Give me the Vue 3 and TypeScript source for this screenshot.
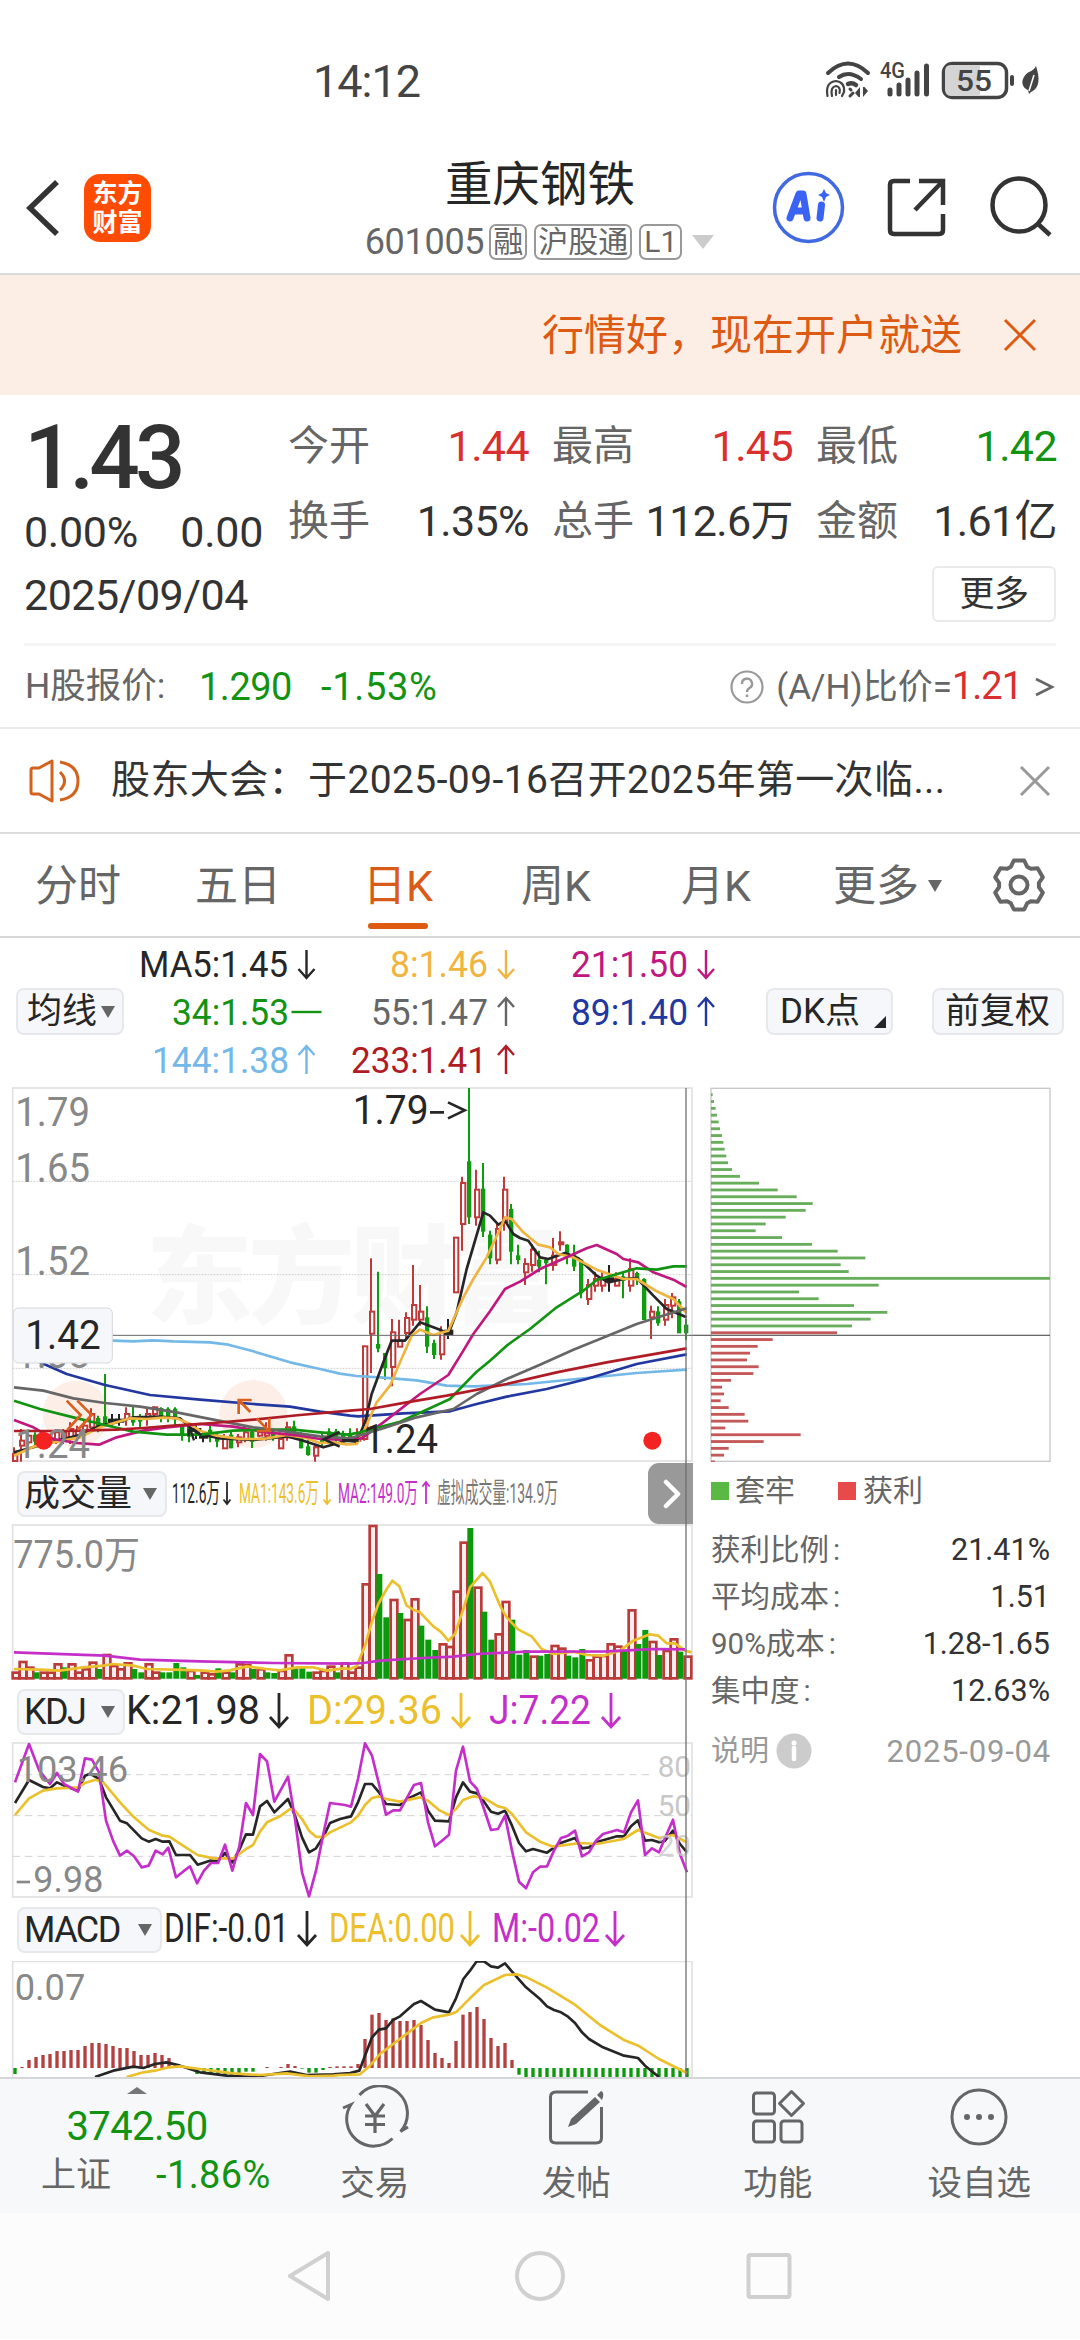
<script setup lang="ts">
type Kind = 'r' | 'g' | 'k'
type Candle = [Kind, number, number, number, number]

// Chart drawings use three units per pixel; bars are 21 units apart.
const xAt = (i: number) => 45 + 21 * i
const shift = (s: string) =>
  s.trim().split(/\s+/).map(p => { const [x, y] = p.split(',').map(Number); return `${x + 1020},${y}` }).join(' ')

const candleSrc = `r 1105 1125 1146 1146|r 1050 1085 1100 1148|r 1065 1070 1090 1100|g 1060 1070 1085 1100|r 1065 1070 1090 1100|g 1065 1070 1090 1105|r 1050 1060 1085 1095|r 1050 1060 1080 1095|r 1030 1050 1080 1095|r 1040 1055 1070 1080|r 1020 1040 1060 1080|r 988 1005 1045 1060|g 1010 1020 1040 1060|g 885 1015 1035 1040|k 1005 1022 1028 1040|k 1005 1022 1028 1040|r 985 1005 1020 1040|g 978 1020 1028 1040|g 1005 1015 1025 1045|r 988 1005 1020 1040|r 982 985 1005 1020|g 985 990 1010 1030|g 985 992 1010 1030|g 985 992 1015 1040|g 1040 1045 1065 1085|g 1030 1045 1070 1090|k 1035 1050 1055 1080|k 1060 1070 1076 1090|g 1040 1055 1070 1090|g 1060 1070 1085 1105|r 1065 1080 1108 1110|g 1055 1070 1105 1108|r 1065 1075 1090 1105|r 1040 1060 1080 1090|g 1050 1060 1085 1107|r 1045 1060 1070 1075|r 1030 1060 1070 1085|g 1050 1060 1075 1085|r 1060 1080 1108 1110|r 1028 1045 1075 1085|g 1025 1045 1065 1075|g 1060 1075 1105 1108|g 1080 1105 1125 1130|r 1095 1105 1130 1148|g 1060 1075 1090 1105|g 1048 1060 1080 1090|g 1050 1060 1080 1090|g 1055 1065 1080 1090|g 1048 1065 1080 1085|r 1048 1075 1085 1085|r 800 802 1080 1085|r 538 698 764 882|g 578 798 806 820|g 822 825 865 902|r 720 760 864 922|r 722 785 803 803|r 700 717 762 780|r 558 678 722 740|r 618 698 722 740|g 682 718 800 822|g 782 795 825 840|r 742 760 826 842|k 720 755 765 780|r 474 476 640 640|r 293 312 435 515|g 27 250 412 435|r 272 332 415 440|g 252 332 455 474|g 455 470 535 556|r 435 450 542 556|r 293 332 430 455|g 375 393 515 556|g 497 532 540 556|r 538 555 580 618|r 495 512 558 578|g 515 545 560 580|g 540 545 550 616|r 477 530 558 575|r 457 490 496 515|g 496 500 530 556|g 497 530 560 576|g 540 545 640 658|r 600 618 660 678|r 578 600 620 638|r 578 600 620 638|k 558 598 605 638|r 580 600 620 620|g 580 595 603 658|r 538 570 620 638|g 578 585 600 618|g 598 603 720 720|r 680 698 715 780|g 682 700 730 740|r 660 678 722 740|r 642 655 680 718|g 660 670 760 762|g 720 740 760 782`
const candles: Candle[] = candleSrc.split('|').map(s => {
  const [k, ...n] = s.split(' ')
  return [k as Kind, ...n.map(Number)] as Candle
})
const tone: Record<Kind, string> = { r: '#bf3b3b', g: '#109c10', k: '#222' }

const priceLines: { c: string; p: string }[] = [
  { c: '#74b8e8', p: '45,772 200,780 340,785 400,787 460,784 520,787 630,790 685,797 760,817 870,850 960,870 ' + shift('0,884 50,891 130,896 230,904 320,920 400,922 560,915 740,897 890,882 1040,872') },
  { c: '#2237a0', p: '45,800 120,850 200,885 315,918 450,948 600,962 760,975 870,983 960,998 ' + shift('30,1010 55,1012 190,1003 330,997 410,975 500,953 620,930 740,900 890,855 1040,826') },
  { c: '#262626', p: '42,1120 100,1105 170,1085 240,1068 300,1040 350,1030 400,1015 480,1013 540,1018 570,1045 600,1065 660,1078 760,1083 860,1072 910,1085 970,1105 1005,1095 1040,1085 ' + shift('50,1088 75,1030 95,945 130,850 155,785 195,785 240,730 300,752 325,765 350,700 380,570 430,400 450,410 475,437 495,425 520,465 540,477 565,485 600,535 625,540 675,522 715,538 770,590 805,610 850,600 890,597 940,650 980,690 1040,715') },
  { c: '#f0b440', p: '42,1130 100,1103 160,1090 240,1075 300,1045 350,1030 390,1018 440,1020 490,1016 530,1018 570,1035 600,1055 650,1070 720,1080 790,1080 860,1068 910,1075 960,1092 1000,1090 1040,1096 ' + shift('50,1095 75,1050 110,970 150,920 180,850 215,770 240,752 280,768 325,755 370,655 400,600 440,535 480,450 495,415 515,420 550,460 595,497 630,505 655,525 700,535 770,572 850,600 890,600 950,637 1000,660 1040,702') },
  { c: '#c0187f', p: '42,1023 100,1045 160,1080 230,1092 297,1097 350,1075 430,1055 500,1045 600,1035 700,1043 800,1060 900,1070 960,1080 1045,1083 ' + shift('65,1078 130,1030 240,945 325,888 370,815 400,765 450,697 495,630 540,608 600,570 680,535 740,508 770,498 830,525 850,540 895,550 940,580 1000,602 1040,624') },
  { c: '#129312', p: '42,965 120,990 220,1015 315,1038 400,1058 500,1067 600,1067 700,1055 800,1052 880,1052 960,1060 1045,1067 ' + shift('60,1060 180,1028 260,992 330,960 410,878 450,845 500,800 570,750 650,685 730,635 770,603 890,568 950,572 1000,562 1040,562') },
  { c: '#666', p: '42,925 130,935 220,958 315,972 420,983 530,1000 640,1022 760,1045 860,1058 960,1072 1050,1078 ' + shift('50,1072 130,1048 230,1015 340,990 410,945 500,900 600,857 700,812 800,772 890,735 1040,688') },
  { c: '#b01c26', p: '42,1056 200,1056 350,1052 430,1047 520,1040 640,1032 760,1022 900,1008 1050,995 ' + shift('90,990 200,970 320,950 500,915 650,880 800,850 1040,808') },
]

const volumes = `r640 r608 r625 g640 r640 r640 r615 g625 r615 r640 r630 r610 g630 r587 r620 r630 r612 g630 g640 r615 r640 g640 g640 g612 g625 r635 g648 r640 r645 g628 r640 g640 r615 r618 g630 r630 g640 g642 r635 r588 g628 g627 g638 r640 r635 r622 g640 r612 r640 r625 r375 r200 g345 g475 r422 g462 r482 r420 g500 g542 g573 r555 r563 r397 r250 g207 r385 g458 g542 r525 r428 g482 g587 g573 r592 g590 g585 r560 r568 g590 g595 g570 r603 r592 r590 r555 r562 g575 r453 g555 g513 r548 g588 r575 r540 g578 r592`
  .split(' ').map(s => ({ k: s[0] as Kind, y: Number(s.slice(1)) }))
const volMa1 = '42,630 120,632 180,635 250,625 310,620 340,615 400,620 440,630 520,632 600,634 650,638 690,634 740,622 800,630 840,634 890,625 940,625 980,635 1030,628 ' + shift('30,630 50,622 75,560 95,490 115,435 140,390 157,365 178,382 200,440 220,452 240,460 280,502 302,518 325,545 345,525 370,450 390,385 428,342 450,368 480,440 500,475 535,512 575,532 605,570 640,585 700,578 740,588 790,590 840,575 880,545 930,526 955,530 980,553 1005,553 1035,575 1055,580')
const volMa2 = '42,580 315,590 420,602 600,607 820,612 1050,614 ' + shift('70,612 120,605 250,597 340,593 410,585 560,578 800,577 850,575 940,570 1035,571')

const lineK = '45,222 87,153 129,174 150,178 171,160 192,170 234,185 255,140 270,134 297,150 318,205 360,275 381,283 425,328 446,338 467,330 488,338 508,337 528,378 570,378 593,407 630,395 654,396 675,372 697,400 720,358 738,316 759,317 780,232 801,216 823,250 864,210 885,260 906,325 927,370 948,358 969,325 990,282 1020,270 ' + shift('33,262 54,220 75,165 96,165 117,190 138,225 180,228 205,208 243,190 264,245 285,275 327,277 348,205 369,160 390,188 411,193 432,218 453,248 474,254 495,245 516,290 537,342 558,367 579,360 621,371 660,343 705,327 726,358 747,355 768,340 831,322 852,322 873,292 894,274 915,335 936,333 957,340 975,335 999,305 1020,345 1041,370')
const lineD = '45,258 87,208 129,185 171,178 234,175 255,162 286,152 310,160 360,220 402,265 446,302 488,320 508,323 549,350 593,378 640,388 700,388 738,360 759,348 780,308 801,280 840,262 870,240 885,245 906,270 927,305 948,323 970,325 990,310 ' + shift('33,280 54,260 75,228 96,207 117,202 138,210 180,218 240,205 264,215 300,245 327,258 348,240 369,213 400,202 432,207 474,232 495,237 516,255 558,310 600,338 640,353 720,342 770,345 850,330 894,303 957,327 999,318 1041,340')
const lineJ = '45,160 87,45 118,125 150,165 171,132 192,165 234,188 255,88 276,92 297,130 318,275 339,335 360,380 381,365 402,382 425,415 446,410 467,365 488,376 505,356 528,445 549,428 570,412 591,463 612,425 633,402 654,402 675,347 697,425 718,352 738,222 759,258 780,75 801,97 823,218 864,143 885,270 906,430 927,502 948,425 969,320 990,222 1035,228 ' + shift('33,233 54,150 75,43 96,80 117,165 138,257 160,244 180,244 200,208 222,168 243,162 264,280 285,352 306,335 327,317 348,125 369,53 390,157 411,180 432,240 453,303 474,300 495,260 516,365 537,458 558,478 579,430 600,413 621,412 642,365 663,327 684,320 705,305 726,382 747,370 768,335 789,315 831,303 852,310 873,250 894,214 915,378 936,358 957,370 978,320 999,272 1020,375 1041,430')

const macd: number[] = [1035, 1014, 993, 984, 978, 975, 966, 966, 963, 963, 951, 942, 942, 945, 951, 957, 957, 966, 978, 978, 972, 978, 987, 1005, 1014, 1020, 1035, 1035, 1038, 1038, 1038, 1038, 1036, 1028, 1028, 1017, 1014, 1017, 1014, 1005, 1011, 1019, 1031, 1031, 1023, 1014, 1012, 1012, 1012, 1005, 930, 857, 852, 873, 868, 876, 876, 873, 888, 933, 972, 987, 1002, 936, 857, 849, 834, 870, 927, 951, 942, 993, 1037, ...Array(24).fill(1046)]
const lineDif = '285,1044 340,1025 400,1013 430,1017 465,1005 500,1000 540,1010 600,1030 680,1040 760,1044 820,1035 870,1028 920,1038 1000,1036 ' + shift('30,1032 58,1025 75,980 96,925 117,902 138,898 159,873 180,862 222,825 243,816 285,842 327,850 348,808 370,750 390,725 410,697 432,697 453,712 474,716 495,703 516,728 558,775 600,810 621,832 642,843 663,850 684,863 705,882 726,910 747,930 789,955 852,980 894,987 915,1010 957,1044')
const lineDea = '380,1044 430,1030 465,1025 500,1016 540,1012 600,1020 700,1033 780,1038 860,1033 930,1042 1000,1040 ' + shift('0,1038 60,1036 90,1010 120,975 243,882 280,865 327,857 350,848 390,808 432,768 495,738 530,736 560,745 620,775 705,827 780,888 850,932 895,950 957,990 1041,1032')

const chips: number[] = [68, 72, 77, 81, 86, 90, 96, 100, 104, 109, 114, 126, 150, 207, 263, 320, 368, 347, 287, 227, 197, 276, 366, 443, 526, 452, 476, 1080, 566, 327, 386, 492, 592, 542, 486, 441, 248, 203, 180, 171, 206, 190, 123, 96, 102, 92, 116, 164, 175, 106, 332, 221, 116, 102, 75]

interface Tag { t: string; x: number; w: number; y: number; c: string; dir: number; ax: number }
const maTags: Tag[] = [
  { t: 'MA5:1.45', x: 139, w: 149, y: 39, c: '#262626', dir: 1, ax: 306.5 },
  { t: '8:1.46', x: 390, w: 98, y: 39, c: '#f0b440', dir: 1, ax: 506 },
  { t: '21:1.50', x: 571, w: 117, y: 39, c: '#c0187f', dir: 1, ax: 706 },
  { t: '34:1.53', x: 172, w: 117, y: 87, c: '#129312', dir: 0, ax: 306.5 },
  { t: '55:1.47', x: 371, w: 117, y: 87, c: '#666', dir: -1, ax: 506 },
  { t: '89:1.40', x: 571, w: 117, y: 87, c: '#2237a0', dir: -1, ax: 706 },
  { t: '144:1.38', x: 152, w: 137, y: 135, c: '#74b8e8', dir: -1, ax: 306.5 },
  { t: '233:1.41', x: 351, w: 136, y: 135, c: '#b01c26', dir: -1, ax: 506 },
]
const arrow = (x: number, cy: number, dir: number, h = 14, w = 8) =>
  dir === 0 ? `M${x - 15} ${cy}h30`
    : `M${x} ${cy - h * dir}V${cy + h * dir}M${x - w} ${cy + (h - w - 1) * dir}L${x} ${cy + h * dir}L${x + w} ${cy + (h - w - 1) * dir}`

interface Head { name: string; w: number; fs: number; by: number; tags: { t: string; x: number; w: number; c: string; dir: number; ax: number }[] }
const Y = '#ebc02c', M = '#c42fc9'
const heads: Record<'vol' | 'kdj' | 'macd', Head> = {
  vol: { name: '成交量', w: 150, fs: 28, by: 42, tags: [
    { t: '112.6万', x: 172, w: 48, c: '#262626', dir: 1, ax: 227 },
    { t: 'MA1:143.6万', x: 239, w: 80, c: Y, dir: 1, ax: 327 },
    { t: 'MA2:149.0万', x: 338, w: 80, c: M, dir: -1, ax: 426 },
    { t: '虚拟成交量:134.9万', x: 437, w: 121, c: '#777', dir: 9, ax: 0 } ] },
  kdj: { name: 'KDJ', w: 108, fs: 40, by: 45, tags: [
    { t: 'K:21.98', x: 126, w: 134, c: '#262626', dir: 1, ax: 279 },
    { t: 'D:29.36', x: 307, w: 135, c: Y, dir: 1, ax: 461 },
    { t: 'J:7.22', x: 489, w: 102, c: M, dir: 1, ax: 611 } ] },
  macd: { name: 'MACD', w: 145, fs: 40, by: 45, tags: [
    { t: 'DIF:-0.01', x: 164, w: 125, c: '#262626', dir: 1, ax: 307 },
    { t: 'DEA:0.00', x: 329, w: 126, c: Y, dir: 1, ax: 470 },
    { t: 'M:-0.02', x: 492, w: 108, c: M, dir: 1, ax: 615 } ] },
}

const gear = Array.from({ length: 6 }, (_, k) => {
  const c = k * 60 - 90
  return [[c - 24, 20], [c - 12, 25], [c + 12, 25], [c + 24, 20]]
    .map(([a, r]) => `${(28 + r * Math.cos(a * Math.PI / 180)).toFixed(1)},${(28 + r * Math.sin(a * Math.PI / 180)).toFixed(1)}`).join(' ')
}).join(' ')

const quotes = [
  [{ l: '今开', v: '1.44', c: 'up' }, { l: '最高', v: '1.45', c: 'up' }, { l: '最低', v: '1.42', c: 'down' }],
  [{ l: '换手', v: '1.35%', c: '' }, { l: '总手', v: '112.6万', c: '' }, { l: '金额', v: '1.61亿', c: '' }],
]
const stats = [
  { l: '获利比例', v: '21.41%' }, { l: '平均成本', v: '1.51' }, { l: '90%成本', v: '1.28-1.65' }, { l: '集中度', v: '12.63%' },
]
const grid: number[] = [307, 587, 868]
const axis = [
  { t: '1.79', y: 142 }, { t: '1.65', y: 309 }, { t: '1.52', y: 587 }, { t: '1.38', y: 868 }, { t: '1.24', y: 1137 },
]
</script>

<template>
  <div class="screen">
    <div class="status">
      <div class="clock">14:12</div>
      <svg class="sysicons" width="222" height="40" viewBox="0 0 222 40">
        <g fill="none" stroke="#444" stroke-linecap="round">
          <path stroke-width="4" d="M5 13Q25-6 45 13" />
          <path stroke-width="4" d="M16 17Q26 10 38 19" />
          <path stroke-width="4.500" d="M25 24Q29 22 33 25" />
          <path stroke-width="2.200" d="M4.500 36Q2 22 13 21Q22 22 21 32L19 36M9 36Q7 27 13 26Q18 27 16.500 33M13 30V35" />
          <path stroke-width="3" d="M27 29L28 30M27 36L30 33" />
        </g>
        <path fill="#444" d="M37 27V37H35.500L32 33ZM40 37V27H41.500L45 31Z" />
        <text x="57" y="18" font-size="22" font-weight="500" fill="#444" textLength="25" lengthAdjust="spacingAndGlyphs">4G</text>
        <g stroke="#444" stroke-width="5" stroke-linecap="round"><path d="M67 30V34M76 25V34M85 20V34M94 13V34M103.500 6V34" /></g>
        <rect x="120.500" y="3.500" width="63" height="34" rx="9" fill="#fff" stroke="#444" stroke-width="3.500" />
        <path d="M128 5H157V36H128Q122 36 122 29V11Q122 5 128 5Z" fill="#d4d4d4" />
        <text x="133" y="31" font-size="30" font-weight="500" fill="#444" textLength="36" lengthAdjust="spacingAndGlyphs">55</text>
        <rect x="187" y="15" width="4" height="11" rx="2" fill="#444" />
        <path d="M213 6C217 18 217 28 208 32L206 34L205 30C196 26 199 16 206 12Q211 10 213 6Z" fill="#444" />
        <path d="M211 15L206 31" stroke="#fff" stroke-width="1.500" />
      </svg>
    </div>

    <header class="head">
      <svg class="back" width="40" height="64" viewBox="0 0 40 64"><path d="M33 6L6 32L33 58" fill="none" stroke="#333" stroke-width="5.500" /></svg>
      <div class="logo"><span>东方</span><span>财富</span></div>
      <div class="title">
        <div class="name">重庆钢铁</div>
        <div class="code"><span class="num">601005</span><i>融</i><i>沪股通</i><i>L1</i><b></b></div>
      </div>
      <svg class="tools" width="290" height="80" viewBox="0 0 290 80">
        <circle cx="38.500" cy="40.500" r="34" fill="none" stroke="#4169e1" stroke-width="3.500" />
        <g fill="none" stroke="#3a63f3" stroke-linejoin="round" stroke-linecap="round" stroke-width="7">
          <path d="M20 51L29 27H33L37 51M24 44H35M51.500 38L50 51" />
        </g>
        <path d="M54 22L56 26L60 28L56 30L54 35L52 30L48 28L52 26Z" fill="#3a63f3" />
        <g fill="none" stroke="#333" stroke-width="4.500">
          <path d="M140 14H124Q120 14 120 18V63Q120 67 124 67H169Q173 67 173 63V47M149 14H173V38M173 14L145 43" />
          <circle cx="249" cy="38" r="26.500" /><path d="M267 56L280 68" />
        </g>
      </svg>
    </header>

    <div class="banner">
      <span>行情好，现在开户就送</span>
      <svg width="36" height="36" viewBox="0 0 36 36"><path d="M3 3L33 33M33 3L3 33" stroke="#dc5a12" stroke-width="3" /></svg>
    </div>

    <section class="quote">
      <div class="last">
        <div class="price">1.43</div>
        <div class="chg"><span>0.00%</span><span>0.00</span></div>
      </div>
      <div class="cells">
        <div v-for="(row, r) in quotes" :key="r" class="qrow">
          <div v-for="q in row" :key="q.l" class="cell"><span class="lab">{{ q.l }}</span><span :class="q.c">{{ q.v }}</span></div>
        </div>
      </div>
    </section>
    <div class="dateline"><span>2025/09/04</span><span class="more">更多</span></div>

    <div class="hk">
      <span>H股报价:</span><span class="down p">1.290</span><span class="down pc">-1.53%</span>
      <svg width="36" height="36" viewBox="0 0 36 36"><circle cx="18" cy="18" r="15.500" fill="none" stroke="#999" stroke-width="2.200" /><path d="M13 15a5 5 0 1 1 7.500 4Q18 20.500 18 23M18 25.500V28" fill="none" stroke="#999" stroke-width="2.400" /></svg>
      <span class="ah">(A/H)比价=<em class="up">1.21</em></span>
      <svg class="gt" width="20" height="22" viewBox="0 0 20 22"><path d="M1 3L17 11L1 19" fill="none" stroke="#666" stroke-width="2.600" /></svg>
    </div>

    <div class="news">
      <svg width="54" height="44" viewBox="0 0 54 44"><g fill="none" stroke="#d2621c" stroke-width="3"><path d="M3 11Q3 9 5 9H11L24 2V42L11 35H5Q3 35 3 33Z" stroke-linejoin="round" /><path d="M32 13Q41 22 32 31M32 3Q50 6 50 22T32 41" /></g></svg>
      <span>股东大会：于2025-09-16召开2025年第一次临...</span>
      <svg class="x" width="32" height="32" viewBox="0 0 32 32"><path d="M2 2L30 30M30 2L2 30" stroke="#999" stroke-width="3" /></svg>
    </div>

    <nav class="tabs">
      <span class="t1">分时</span><span class="t2">五日</span><span class="t3 on">日K</span><span class="t4">周K</span><span class="t5">月K</span><span class="t6">更多<b></b></span>
      <svg width="56" height="56" viewBox="0 0 56 56"><g fill="none" stroke="#666" stroke-width="4" stroke-linejoin="round"><polygon :points="gear" /><circle cx="28" cy="28" r="8.500" /></g></svg>
    </nav>

    <div class="mabar">
      <svg class="tags" width="740" height="142" viewBox="0 0 740 142">
        <g v-for="m in maTags" :key="m.t">
          <text :x="m.x" :y="m.y" font-size="36.500" :fill="m.c" :textLength="m.w" lengthAdjust="spacingAndGlyphs">{{ m.t }}</text>
          <path :d="arrow(m.ax, m.y - 13, m.dir)" fill="none" :stroke="m.c" stroke-width="2.400" />
        </g>
      </svg>
      <div class="btn ma">均线<b></b></div>
      <div class="btn dk">DK点<u></u></div>
      <div class="btn fq">前复权</div>
    </div>

    <div class="body">
      <div class="left">
        <svg class="chart" width="690" height="382" viewBox="0 0 2070 1146">
          <text x="438" y="708" font-size="320" font-weight="900" fill="#f8f8f8" textLength="1240">东方财富</text>
          <rect x="38" y="27" width="2038" height="1119" fill="none" stroke="#e2e2e2" stroke-width="5" />
          <line v-for="g in grid" :key="g" x1="38" x2="2076" :y1="g" :y2="g" stroke="#ccc" stroke-width="3" stroke-dasharray="5 4" />
          <circle cx="228" cy="1005" r="100" fill="#fdefe8" /><circle cx="760" cy="1005" r="102" fill="#fdefe8" />
          <g v-for="(c, i) in candles" :key="i" :stroke="tone[c[0]]" :fill="c[0] === 'r' ? '#fff' : tone[c[0]]">
            <line :x1="xAt(i) - 3" :x2="xAt(i) - 3" :y1="c[1]" :y2="c[2]" stroke-width="6" />
            <line :x1="xAt(i) - 3" :x2="xAt(i) - 3" :y1="c[3]" :y2="c[4]" stroke-width="6" />
            <rect :x="xAt(i) - (c[0] === 'k' ? 12 : 6)" :y="c[2]" :width="c[0] === 'k' ? 22 : c[0] === 'r' ? 13 : 7" :height="c[3] - c[2]" stroke-width="6" />
          </g>
          <g class="pl"><polyline v-for="l in priceLines" :key="l.c" :points="l.p" :stroke="l.c" /></g>
          <text v-for="a in axis" :key="a.t" x="46" :y="a.y" font-size="122" fill="#888" textLength="224" lengthAdjust="spacingAndGlyphs">{{ a.t }}</text>
          <g fill="none" stroke="#d9601e" stroke-width="8">
            <path d="M200 965L242 1008L202 1053M232 965L275 1008L233 1053M716 1005V963H755M716 963L751 999M770 1018L808 1057M770 1056H808V1018" />
          </g>
          <path d="M570 1048L582 1084M568 1048L604 1068M566 1050V1072" fill="none" stroke="#262626" stroke-width="7" />
          <circle cx="131" cy="1085" r="27" fill="#f52222" /><circle cx="1957" cy="1085" r="27" fill="#f52222" />
          <text x="1058" y="135" font-size="122" fill="#262626" textLength="228" lengthAdjust="spacingAndGlyphs">1.79</text>
          <path d="M1290 100H1332M1344 70L1394 94L1344 118" fill="none" stroke="#262626" stroke-width="8" />
          <path d="M1019 1059L972 1081L1019 1103M1026 1084H1076" fill="none" stroke="#262626" stroke-width="8" />
          <text x="1090" y="1122" font-size="122" fill="#262626" textLength="224" lengthAdjust="spacingAndGlyphs">1.24</text>
          <line x1="330" x2="3150" y1="769" y2="769" stroke="#666" stroke-width="3" />
          <rect x="40" y="687" width="297" height="165" rx="16" fill="#f6f7fa" stroke="#d6d8de" stroke-width="3" />
          <text x="76" y="809" font-size="122" fill="#262626" textLength="226" lengthAdjust="spacingAndGlyphs">1.42</text>
        </svg>

        <template v-for="(h, key) in heads" :key="key">
          <div class="ihead">
            <div class="btn" :class="{ latin: key !== 'vol' }" :style="{ width: h.w + 'px' }">{{ h.name }}<b></b></div>
            <svg class="htext" width="692" height="64" viewBox="0 0 692 64">
              <g v-for="g in h.tags" :key="g.t">
                <text :x="g.x" :y="h.by" :font-size="h.fs" :fill="g.c" :textLength="g.w" lengthAdjust="spacingAndGlyphs">{{ g.t }}</text>
                <path v-if="g.dir !== 9" :d="arrow(g.ax, key === 'vol' ? 32 : 31, g.dir, key === 'vol' ? 11 : 17, key === 'vol' ? 3.5 : 9)" fill="none" :stroke="g.c" :stroke-width="key === 'vol' ? 1.8 : 2.8" />
              </g>
            </svg>
          </div>
          <svg v-if="key === 'vol'" class="chart" width="690" height="154" viewBox="0 198 2070 462">
            <rect x="38" y="198" width="2038" height="461" fill="none" stroke="#e2e2e2" stroke-width="5" />
            <text x="40" y="328" font-size="114" fill="#888" textLength="380" lengthAdjust="spacingAndGlyphs">775.0万</text>
            <template v-for="(v, i) in volumes" :key="i">
              <rect v-if="v.k === 'r'" :x="xAt(i) - 7" :y="v.y + 1" width="20" :height="657 - v.y" fill="#fbeeee" stroke="#bb3a3a" stroke-width="8" />
              <rect v-else :x="xAt(i) - 8" :y="v.y" width="18" :height="659 - v.y" fill="#0b9a0b" />
            </template>
            <g class="pl"><polyline :points="volMa1" :stroke="Y" /><polyline :points="volMa2" :stroke="M" /></g>
          </svg>
          <svg v-else-if="key === 'kdj'" class="chart" width="690" height="154" viewBox="0 42 2070 462">
            <rect x="38" y="42" width="2038" height="462" fill="none" stroke="#e2e2e2" stroke-width="5" />
            <path d="M38 137H1960M38 260H2076M38 382H2076" stroke="#d2d2d2" stroke-width="3" stroke-dasharray="22 15" fill="none" />
            <g class="pl"><polyline :points="lineK" stroke="#262626" /><polyline :points="lineD" :stroke="Y" /><polyline :points="lineJ" :stroke="M" /></g>
            <g font-size="110" fill="#888">
              <text x="50" y="158" textLength="334" lengthAdjust="spacingAndGlyphs">103.46</text>
              <text x="100" y="490" textLength="210" lengthAdjust="spacingAndGlyphs">9.98</text>
            </g>
            <path d="M50 459H90" stroke="#888" stroke-width="8" />
            <g font-size="88" fill="#c8c8c8">
              <text x="1973" y="145" textLength="100" lengthAdjust="spacingAndGlyphs">80</text>
              <text x="1973" y="260" textLength="100" lengthAdjust="spacingAndGlyphs">50</text>
              <text x="1973" y="380" textLength="100" lengthAdjust="spacingAndGlyphs" fill-opacity=".8">20</text>
            </g>
          </svg>
          <svg v-else class="chart clip" width="694" height="116" viewBox="0 696 2082 348">
            <path d="M38 1050V697H2076V1050" fill="none" stroke="#e2e2e2" stroke-width="5" />
            <text x="44" y="812" font-size="110" fill="#888" textLength="212" lengthAdjust="spacingAndGlyphs">0.07</text>
            <rect v-for="(m, i) in macd" :key="i" :x="xAt(i) - 5" :y="Math.min(m, 1017)" width="10" :height="Math.abs(m - 1017)" :fill="m < 1017 ? '#b54040' : '#0b9a0b'" />
            <g class="pl"><polyline :points="lineDif" stroke="#262626" /><polyline :points="lineDea" :stroke="Y" /></g>
          </svg>
        </template>
        <div class="pager"><svg width="20" height="32" viewBox="0 0 20 32"><path d="M3 4L15 16L3 28" fill="none" stroke="#fff" stroke-width="4.500" stroke-linecap="round" stroke-linejoin="round" /></svg></div>
        <div class="cross"></div>
      </div>

      <div class="right">
        <svg class="chart" width="390" height="382" viewBox="0 0 1170 1146">
          <rect x="63" y="28" width="1017" height="1119" fill="none" stroke="#c8c8c8" stroke-width="4" />
          <rect v-for="(c, i) in chips" :key="i" x="63" :y="43 + 20.4 * i" :width="c - 63" :height="i === 54 ? 4 : 8.5" :fill="i < 35 ? '#68ad5b' : '#c45858'" />
          <line x1="0" x2="1080" y1="769" y2="769" stroke="#666" stroke-width="3" />
        </svg>
        <div class="legend"><b class="gr"></b>套牢<b class="rd"></b>获利</div>
        <div v-for="s in stats" :key="s.l" class="stat"><span>{{ s.l }}<s>:</s></span><em>{{ s.v }}</em></div>
        <div class="note"><span>说明</span>
          <svg width="36" height="36" viewBox="0 0 36 36"><circle cx="18" cy="18" r="17.500" fill="#ccc" /><path d="M18 15V26" stroke="#fff" stroke-width="4.500" stroke-linecap="round" /><circle cx="18" cy="10" r="2.500" fill="#fff" /></svg>
          <em>2025-09-04</em></div>
      </div>
    </div>

    <footer class="bar">
      <div class="index">
        <b></b>
        <div class="pt">3742.50</div>
        <div class="ix"><span>上证</span><span class="down">-1.86%</span></div>
      </div>
      <div class="item">
        <svg width="68" height="64" viewBox="0 0 68 64"><g fill="none" stroke="#666" stroke-width="3">
          <path d="M18.500 10A27 27 0 0 1 59.500 46.500L67 42M51.500 53.500A27 27 0 0 1 10 19.500L2 23" />
          <path d="M25 19L34 31L43 19M34 31V48M24 31H44M24 39.500H44" stroke-width="3.200" /></g></svg>
        <span>交易</span>
      </div>
      <div class="item">
        <svg width="68" height="64" viewBox="0 0 68 64"><g fill="none" stroke="#666" stroke-width="3">
          <path d="M46 7H14Q8.500 7 8.500 12V53Q8.500 58 14 58H54Q59.500 58 59.500 53V22" /></g>
          <path d="M53 12L58 17L34 39L26 42L29 34ZM55 10L59 6Q62 7 61 12L60 15Z" fill="#666" /></svg>
        <span>发帖</span>
      </div>
      <div class="item">
        <svg width="68" height="64" viewBox="0 0 68 64"><g fill="none" stroke="#666" stroke-width="3" stroke-linejoin="round">
          <rect x="9.500" y="8" width="21" height="21" rx="3" /><rect x="9.500" y="36" width="21" height="21" rx="3" /><rect x="37" y="36" width="21" height="21" rx="3" /><path d="M47.500 6.500L59.500 18.500L47.500 30.500L35.500 18.500Z" /></g></svg>
        <span>功能</span>
      </div>
      <div class="item">
        <svg width="68" height="64" viewBox="0 0 68 64"><circle cx="34" cy="32" r="27" fill="none" stroke="#666" stroke-width="3" /><g fill="#666"><circle cx="22" cy="32" r="3" /><circle cx="34" cy="32" r="3" /><circle cx="46" cy="32" r="3" /></g></svg>
        <span>设自选</span>
      </div>
    </footer>

    <div class="sysnav">
      <svg width="1080" height="126" viewBox="0 0 1080 126"><g fill="none" stroke="#d0d0d0" stroke-width="4" stroke-linejoin="round"><path d="M290 63L328 40V86Z" /><circle cx="540" cy="63" r="23" /><rect x="748.500" y="42" width="41" height="42" rx="2" /></g></svg>
    </div>
  </div>
</template>

<style>
html, body { margin: 0; background: #fff; }
</style>

<style scoped>
.screen { width: 1080px; height: 2340px; overflow: hidden; display: flex; flex-direction: column; background: #fff; color: #333; font-family: Roboto, "Noto Sans CJK SC", sans-serif; line-height: 1; }
.screen * { box-sizing: border-box; }
.screen > * { flex: none; }
svg { display: block; flex: none; }
span, em, i { white-space: nowrap; font-style: normal; }
.up { color: #d92f2f; }
.down { color: #129312; }

.status { height: 164px; display: flex; justify-content: space-between; padding: 0 35px 0 313px; }
.clock { font-size: 45px; letter-spacing: -1px; color: #444; padding-top: 59px; }
.sysicons { margin-top: 60px; overflow: visible; }

.head { height: 112px; border-bottom: 2px solid #d9dadc; position: relative; display: flex; padding-left: 24px; margin-top: -1px; }
.back { margin-top: 13px; margin-right: 20px; }
.logo { width: 67px; height: 68px; margin-top: 11px; border-radius: 16px; background: #ff4c05; color: #fff; display: flex; flex-direction: column; align-items: center; justify-content: center; font-size: 25px; font-weight: 700; line-height: 29px; }
.title { flex: 1; display: flex; flex-direction: column; align-items: center; margin-left: 155px; color: #262626; }
.name { font-size: 47.500px; line-height: 50px; margin-top: -3px; padding-left: 4px; white-space: nowrap; }
.code { display: flex; align-items: center; margin-top: 13px; font-size: 36px; color: #666; height: 38px; padding-left: 3px; }
.code .num { letter-spacing: -.3px; margin-right: 5px; }
.code i { border: 2px solid #999; border-radius: 7px; height: 36px; line-height: 32px; font-size: 30px; padding: 0 2px; margin-right: 7px; }
.code i:nth-of-type(3) { padding: 0 3px; }
.code b { border: 11.500px solid transparent; border-top: 14px solid #ccc; border-bottom: 0; margin-left: 3px; }
.tools { margin-top: 4px; margin-right: 20px; }

.banner { height: 120px; background: #fceee4; display: flex; align-items: center; justify-content: flex-end; color: #dc5a12; font-size: 42px; padding-right: 42px; }
.banner span { margin-right: 40px; position: relative; top: 1px; }

.quote { height: 165px; display: flex; padding-left: 24px; }
.last { width: 264px; }
.price { font-size: 89px; font-weight: 500; letter-spacing: -5px; height: 102px; padding-top: 18px; }
.chg { display: flex; justify-content: space-between; padding: 14px 25px 0 0; font-size: 43px; letter-spacing: -.3px; }
.cells { padding-top: 14px; }
.qrow { height: 75px; display: flex; gap: 23px; align-items: center; }
.cell { width: 241px; display: flex; justify-content: space-between; align-items: center; font-size: 43px; letter-spacing: -.6px; }
.cell .lab { color: #666; font-size: 41px; letter-spacing: 0; }
.dateline { height: 86px; margin: 0 24px; border-bottom: 3px solid #f5f5f5; display: flex; justify-content: space-between; align-items: flex-start; font-size: 43px; padding-top: 14px; letter-spacing: -.5px; }
.more { margin-top: -8px; width: 124px; height: 56px; border: 2px solid #eaeaea; border-radius: 6px; font-size: 35px; display: flex; align-items: center; justify-content: center; }

.hk { height: 83px; border-bottom: 2px solid #ebebeb; display: flex; align-items: center; padding: 0 25px; font-size: 38px; color: #666; }
.hk span:first-child { font-size: 35.500px; width: 174px; }
.hk .p { width: 122px; letter-spacing: -.5px; }
.hk .pc { letter-spacing: .7px; }
.hk svg { margin-left: auto; }
.hk .ah { font-size: 35px; margin-left: 11px; position: relative; top: -1px; }
.hk em { font-size: 38px; letter-spacing: -1px; }
.hk .gt { margin-left: 13px; }

.news { height: 105px; border-bottom: 2px solid #dcdcdc; display: flex; align-items: center; padding: 0 29px 0 28px; font-size: 39px; }
.news span { margin-left: 29px; letter-spacing: .4px; }
.news .x { margin-left: auto; }

.tabs { height: 104px; border-bottom: 2px solid #d6d6d6; display: flex; align-items: center; font-size: 43px; color: #666; position: relative; padding-left: 35px; }
.tabs span { position: relative; top: 1px; }
.t1, .t2, .t3 { width: 160px; }
.t2 { width: 168px; }
.t3 { width: 158px; }
.t4 { width: 160px; }
.t5 { width: 152px; }
.t6 { width: 158px; display: flex; align-items: center; }
.t6 b { border: 7.500px solid transparent; border-top: 12px solid #666; border-bottom: 0; margin-left: 9px; }
.on { color: #d95b17; }
.on::after { content: ""; position: absolute; left: 5px; top: 58px; width: 60px; height: 6px; border-radius: 3px; background: #dd5a10; }

.mabar { height: 141px; display: flex; align-items: flex-start; position: relative; padding: 50px 16px 0; }
.tags { position: absolute; left: 0; top: 0; overflow: visible; }
.btn { height: 47px; border: 2px solid #e6e8ec; border-radius: 8px; background: #f6f7fa; color: #262626; display: flex; align-items: center; justify-content: space-between; font-size: 35px; padding: 0 9px; position: relative; }
.btn b { border: 7.500px solid transparent; border-top: 12px solid #666; border-bottom: 0; }
.ma { width: 108px; padding-right: 7px; }
.dk { width: 127px; margin-left: 642px; padding-left: 12px; }
.dk u { position: absolute; right: 5px; bottom: 5px; border-left: 12px solid transparent; border-bottom: 12px solid #262626; }
.fq { width: 132px; margin-left: 39px; padding: 0 11px; }

.body { height: 998px; display: flex; }
.left { width: 690px; position: relative; }
.right { width: 390px; }
.chart { overflow: visible; }
.clip { overflow: hidden; }
.pl polyline { fill: none; stroke-width: 8; stroke-linejoin: round; }
.ihead { height: 64px; position: relative; padding: 10px 0 0 17px; }
.ihead .btn { height: 46px; padding: 0 8px 0 5px; font-size: 36px; }
.ihead .latin { letter-spacing: -1.6px; }
.ihead .btn b { border-width: 12px 7.500px 0; }
.htext { position: absolute; left: 0; top: 0; }
.pager { position: absolute; left: 648px; top: 384px; width: 45px; height: 61px; background: #999; border-radius: 11px 0 0 11px; display: flex; align-items: center; padding-left: 15px; }
.cross { position: absolute; left: 685px; top: 9px; width: 2px; height: 989px; background: rgba(110, 110, 110, .65); }

.legend { display: flex; align-items: center; height: 60px; padding-left: 21px; font-size: 30px; color: #666; }
.legend b { width: 18px; height: 18px; margin-right: 6px; background: #5ab845; }
.legend .rd { background: #e64a4a; margin-left: 43px; margin-right: 7px; }
.stat { display: flex; align-items: center; justify-content: space-between; height: 47px; padding: 0 30px 0 21px; font-size: 29.500px; color: #666; position: relative; top: 6px; }
.stat s { text-decoration: none; margin-left: 4px; }
.stat em { color: #333; font-size: 30.500px; }
.note { display: flex; align-items: center; padding: 0 30px 0 21px; height: 60px; margin-top: 12px; font-size: 29px; color: #999; }
.note svg { margin-left: 7px; }
.note em { margin-left: auto; font-size: 31px; letter-spacing: .8px; margin-right: -1px; }

.bar { height: 136px; border-top: 2px solid #d4d6d8; background: #f6f8fa; display: flex; }
.index { width: 274px; position: relative; display: flex; flex-direction: column; align-items: center; }
.index b { border: 10.500px solid transparent; border-bottom: 7px solid #777; border-top: 0; margin-top: 8px; }
.pt { font-size: 40px; color: #129312; margin-top: 13px; letter-spacing: -.6px; }
.ix { display: flex; align-items: center; align-self: stretch; padding-left: 41px; margin-top: 8px; font-size: 38px; height: 40px; }
.ix span:first-child { font-size: 35px; color: #666; width: 115px; }
.ix .down { letter-spacing: .4px; }
.item { width: 201.500px; display: flex; flex-direction: column; align-items: center; padding-top: 6px; font-size: 34.500px; color: #666; }
.item span { margin-top: 17px; }
.sysnav { height: 126px; background: #fcfcfc; }
</style>
